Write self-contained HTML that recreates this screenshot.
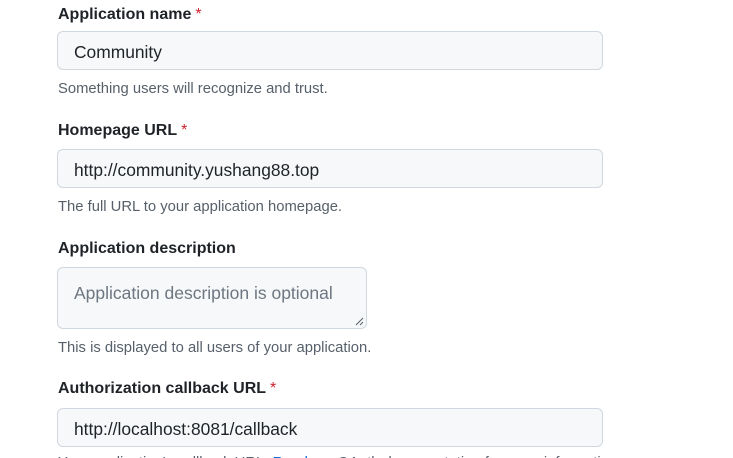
<!DOCTYPE html>
<html><head><meta charset="utf-8"><style>
html,body{margin:0;padding:0;background:#fff;width:733px;height:458px;overflow:hidden}
body{font-family:"Liberation Sans",Arial,sans-serif;color:#1f2328;position:relative}
.l{position:absolute;left:58px;font-weight:bold;font-size:16px;line-height:20px}
.l span{color:#cf222e;font-weight:normal;margin-left:4px}
.i{position:absolute;left:57px;width:528px;height:37px;border:1px solid #d0d7de;border-radius:6px;background:#f6f8fa;font-size:17.4px;line-height:40px;padding-left:16px;box-sizing:content-box}
.h{position:absolute;left:58px;font-size:14.8px;color:#57606a;line-height:18px}
.t{position:absolute;left:57px;top:267px;width:308px;height:60px;border:1px solid #d0d7de;border-radius:6px;background:#f6f8fa}
.t div{position:absolute;left:16px;top:15px;font-size:17.5px;color:#6e7781}
</style></head><body>
<div class="l" style="top:5px">Application name<span>*</span></div>
<div class="i" style="top:31px">Community</div>
<div class="h" style="top:80px">Something users will recognize and trust.</div>
<div class="l" style="top:121px">Homepage URL<span>*</span></div>
<div class="i" style="top:149px">http://community.yushang88.top</div>
<div class="h" style="top:198px">The full URL to your application homepage.</div>
<div class="l" style="top:239px">Application description</div>
<div class="t"><div>Application description is optional</div>
<svg style="position:absolute;right:2px;bottom:2px" width="10" height="10"><path d="M9 2L2 9M9 6L6 9" stroke="#57606a" stroke-width="1"/></svg></div>
<div class="h" style="top:339px">This is displayed to all users of your application.</div>
<div class="l" style="top:379px">Authorization callback URL<span>*</span></div>
<div class="i" style="top:408px">http://localhost:8081/callback</div>
<div class="h" style="top:454px">Your application's callback URL. <span style="color:#0969da">Read our</span> OAuth documentation for more information.</div>
</body></html>
